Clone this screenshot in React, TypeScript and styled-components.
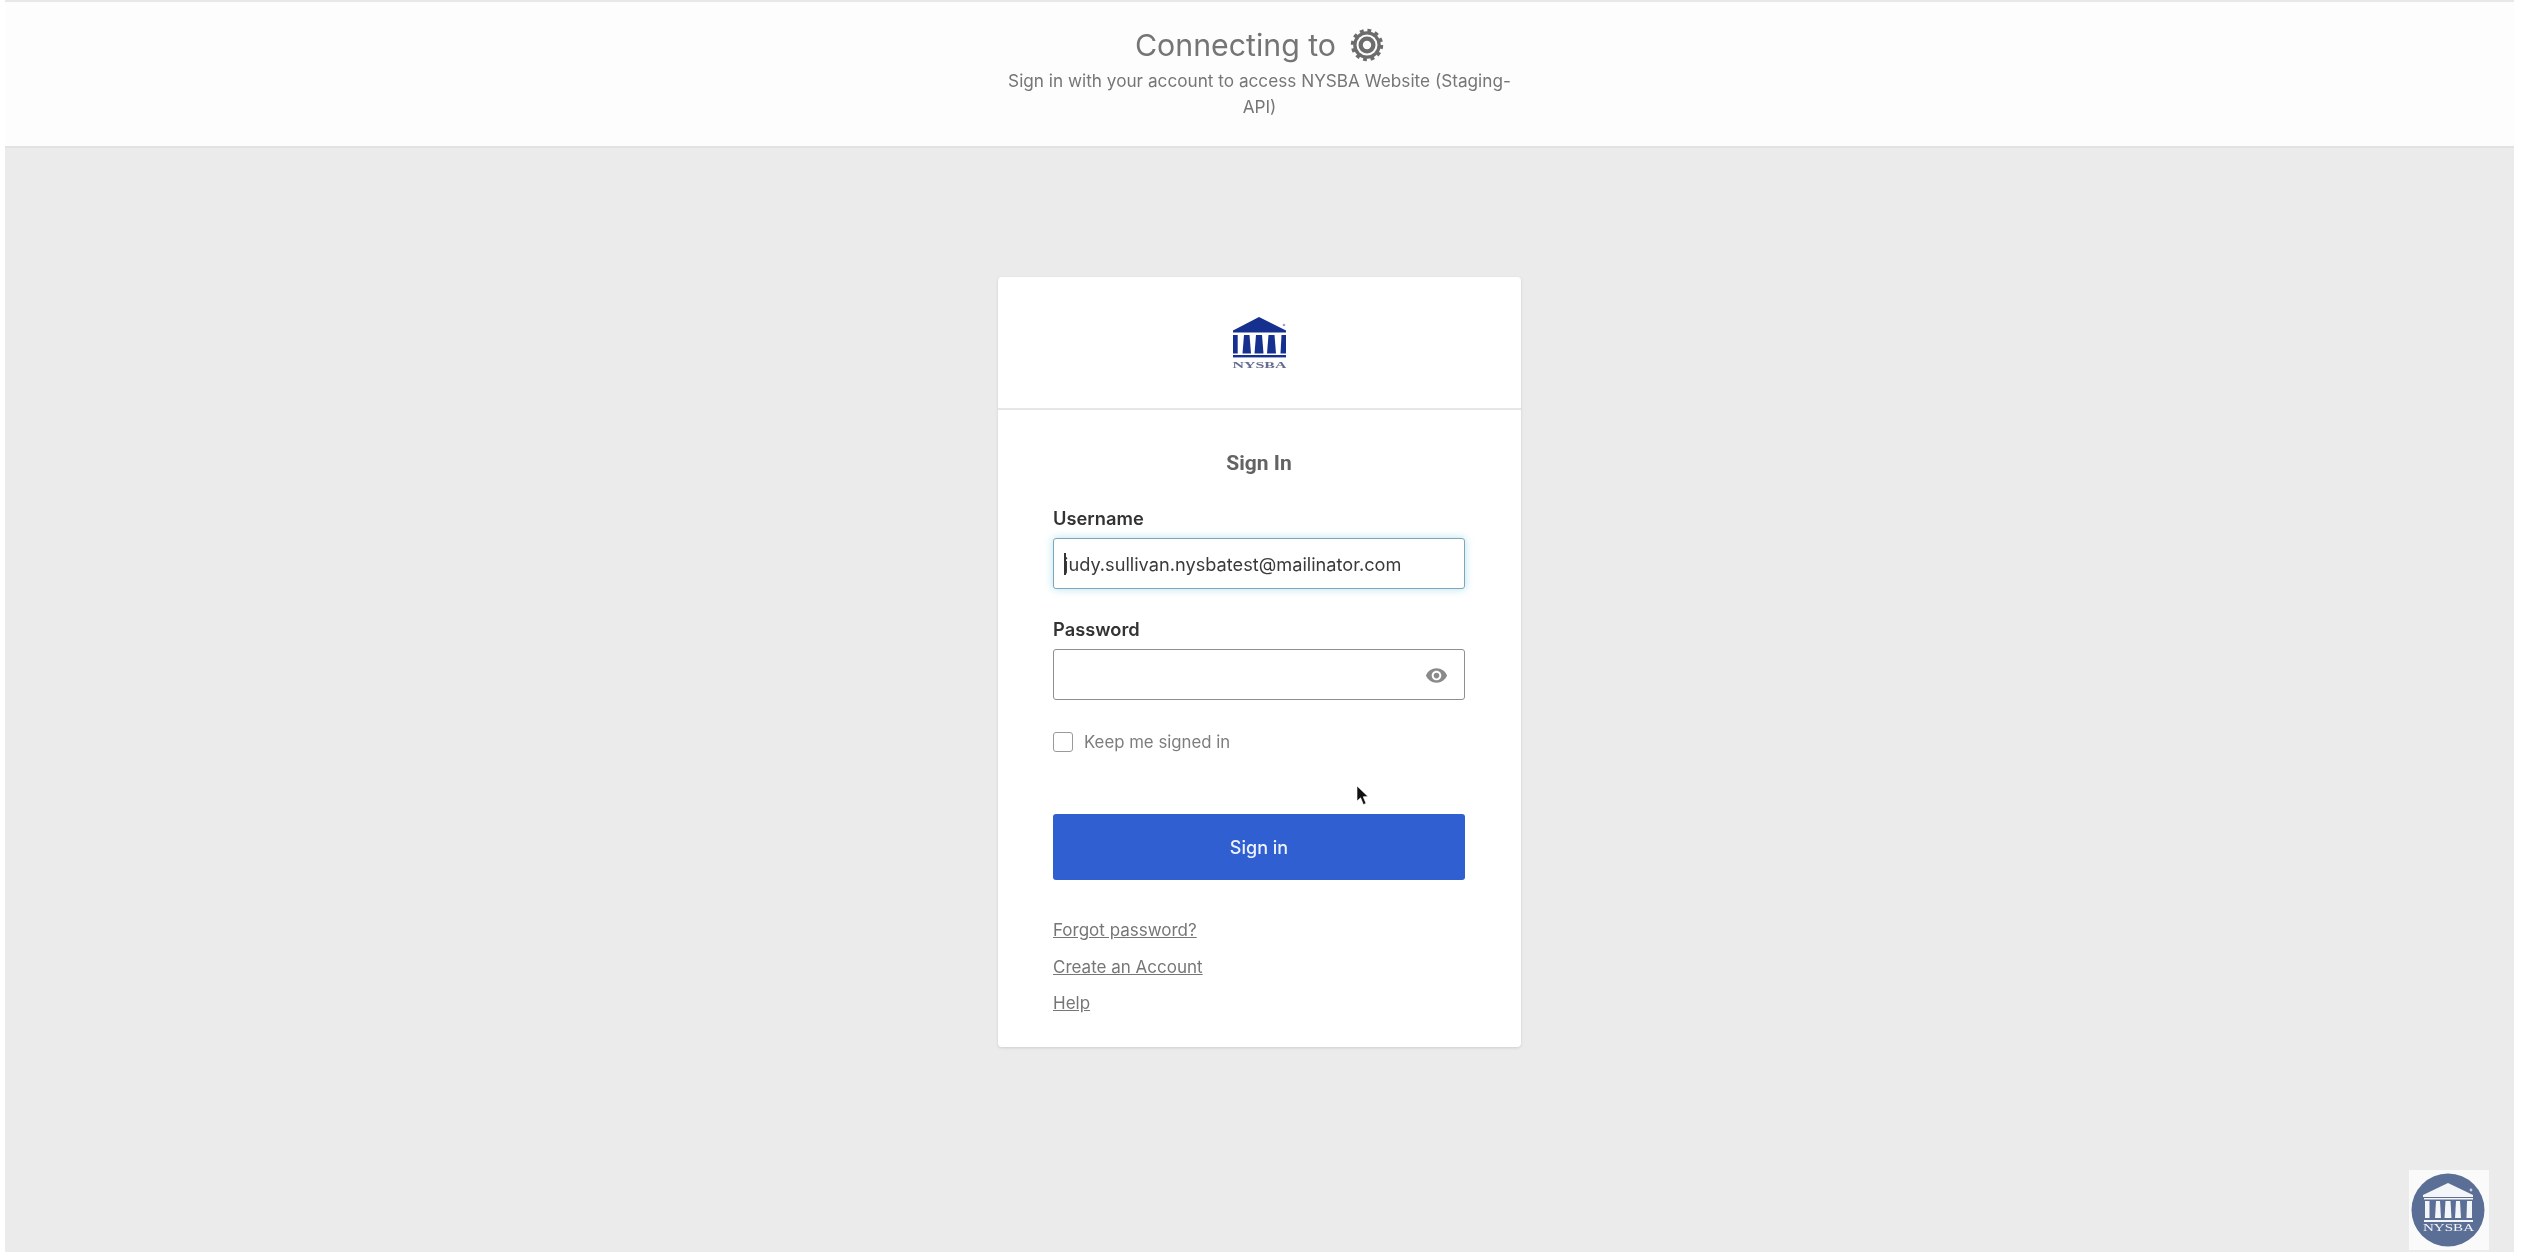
import React from 'react';
import styled, { createGlobalStyle } from 'styled-components';

const GlobalStyle = createGlobalStyle`
  html, body {
    margin: 0;
    padding: 0;
    background: #fff;
  }
  * {
    box-sizing: border-box;
  }
`;

const Page = styled.div`
  position: relative;
  display: flex;
  flex-direction: column;
  height: 1252px;
  padding: 0 8px 0 5px;
  overflow: hidden;
  font-family: Inter, "Liberation Sans", sans-serif;
  filter: blur(0.45px);
`;

const TopBar = styled.header`
  display: flex;
  flex-direction: column;
  align-items: center;
  height: 148px;
  padding-top: 23px;
  background: #fdfdfd;
  border-top: 2px solid #e8e8e8;
  border-bottom: 2px solid #e2e2e2;
`;

const Connecting = styled.div`
  display: flex;
  align-items: center;
  gap: 14px;
  height: 40px;
  font-size: 30.3px;
  color: #757575;
`;

const Subtitle = styled.p`
  width: 510px;
  margin: 3px 0 0;
  font-size: 17.2px;
  line-height: 26px;
  text-align: center;
  color: #767676;
`;

const Main = styled.main`
  flex: 1;
  display: flex;
  justify-content: center;
  align-items: flex-start;
  padding-top: 129px;
  background: #ebebeb;
`;

const Card = styled.section`
  width: 523px;
  background: #fff;
  border-radius: 4px;
  box-shadow: 0 1px 3px rgba(0, 0, 0, 0.12);
`;

const CardLogo = styled.div`
  display: flex;
  justify-content: center;
  height: 133px;
  padding-top: 40px;
  border-bottom: 2px solid #e6e6e6;
`;

const CardBody = styled.div`
  padding: 40px 56px 32px 55px;
`;

const Title = styled.h1`
  margin: 0 0 31px;
  font-family: Roboto, "Liberation Sans", sans-serif;
  font-size: 21px;
  font-weight: 700;
  line-height: 26px;
  text-align: center;
  color: #636363;
`;

const Label = styled.label`
  display: block;
  margin-bottom: 9px;
  font-size: 18.3px;
  font-weight: 600;
  line-height: 22px;
  color: #333;
`;

const InputWrap = styled.div`
  position: relative;
  height: 51px;
  margin-bottom: 29px;
`;

const Input = styled.input<{ $focused?: boolean }>`
  width: 100%;
  height: 100%;
  padding: 0 10px;
  font-family: inherit;
  font-size: 18.2px;
  color: #3a3a3a;
  background: #fff;
  border: 1.5px solid ${(p) => (p.$focused ? '#7fa6b8' : '#8f8f8f')};
  border-radius: 3px;
  outline: none;
  box-shadow: ${(p) => (p.$focused ? '0 0 9px rgba(120, 200, 230, 0.55)' : 'none')};
`;

const Caret = styled.span`
  position: absolute;
  left: 11px;
  top: 15px;
  width: 2px;
  height: 22px;
  background: #333;
`;

const EyeButton = styled.span`
  position: absolute;
  right: 17px;
  top: 15px;
  display: flex;
  color: #8a8a8a;
`;

const CheckRow = styled.div`
  display: flex;
  align-items: center;
  gap: 11px;
  height: 20px;
  margin-top: 32px;
  font-size: 16.8px;
  color: #7d7d7d;
`;

const CheckBox = styled.span`
  width: 20px;
  height: 20px;
  background: #fff;
  border: 1.5px solid #9a9a9a;
  border-radius: 3px;
`;

const SubmitButton = styled.button`
  display: block;
  width: 100%;
  height: 66px;
  margin-top: 62px;
  font-family: inherit;
  font-size: 18px;
  font-weight: 500;
  color: #eef3fc;
  background: #2f5fd0;
  border: none;
  border-radius: 3px;
`;

const LinkList = styled.nav`
  display: flex;
  flex-direction: column;
  align-items: flex-start;
  gap: 12.5px;
  margin-top: 38px;
`;

const TextLink = styled.a`
  font-size: 17px;
  line-height: 24px;
  color: #767676;
  text-decoration: underline;
`;

const Pointer = styled.svg`
  position: absolute;
  left: 1356px;
  top: 785px;
`;

const BadgeLogo = styled.div`
  position: absolute;
  left: 2409px;
  top: 1170px;
  display: flex;
  width: 80px;
  height: 80px;
  background: #fafafa;
`;

// the small gear from the connecting line
const GearIcon = () => (
  <svg width="34" height="34" viewBox="0 0 34 34">
    <circle cx="17" cy="17" r="14.5" fill="none" stroke="#6c6c6c" strokeWidth="3.4" strokeDasharray="3.8 3.79" />
    <circle cx="17" cy="17" r="13.8" fill="#6c6c6c" />
    <circle cx="17" cy="17" r="10.5" fill="#fdfdfd" />
    <circle cx="17" cy="17" r="8.5" fill="#6c6c6c" />
    <circle cx="17" cy="17" r="4.2" fill="#fdfdfd" />
  </svg>
);

const EyeIcon = () => (
  <svg width="23" height="23" viewBox="0 0 24 24" fill="currentColor">
    <path d="M12 4.5C7 4.5 2.73 7.61 1 12c1.73 4.39 6 7.5 11 7.5s9.27-3.11 11-7.5c-1.73-4.39-6-7.5-11-7.5zM12 17c-2.76 0-5-2.24-5-5s2.24-5 5-5 5 2.24 5 5-2.24 5-5 5zm0-8c-1.66 0-3 1.34-3 3s1.34 3 3 3 3-1.34 3-3-1.34-3-3-3z" />
  </svg>
);

const NysbaLogo = () => (
  <svg width="57" height="53" viewBox="0 0 57 53">
    <polygon points="28,0 55,13.5 55,15.5 2,15.5 2,13.5" fill="#16308f" />
    <circle cx="53" cy="8" r="1.3" fill="#9aa5c8" />
    <polygon points="2,18 6.7,18 6.7,36.5 2,36.5" fill="#16308f" />
    <polygon points="13,18 18.5,18 20,36.5 11.5,36.5" fill="#16308f" />
    <polygon points="25,18 31,18 32.5,36.5 23.5,36.5" fill="#16308f" />
    <polygon points="37.5,18 43.5,18 45,36.5 36,36.5" fill="#16308f" />
    <polygon points="50.5,18 55,18 55,36.5 49.5,36.5" fill="#16308f" />
    <rect x="2" y="38" width="53" height="2.4" fill="#16308f" />
    <text x="1.5" y="51" textLength="54" lengthAdjust="spacingAndGlyphs" fontFamily="'Liberation Serif', serif" fontSize="9" fontWeight="700" fill="#666c8e">
      NYSBA
    </text>
  </svg>
);

const NysbaBadge = () => (
  <svg width="80" height="80" viewBox="0 0 80 80">
    <circle cx="39" cy="40" r="36.5" fill="#5a6e96" />
    <polygon points="39,13 64,25 64,27 14,27 14,25" fill="#f4f5f8" />
    <circle cx="62" cy="20" r="1.4" fill="#cdd3e0" />
    <rect x="15" y="28" width="49" height="1.5" fill="#f4f5f8" />
    <polygon points="16,31 20.5,31 20.5,48 16,48" fill="#f4f5f8" />
    <polygon points="27,31 31,31 32,48 26,48" fill="#f4f5f8" />
    <polygon points="36.5,31 41.5,31 42.5,48 35.5,48" fill="#f4f5f8" />
    <polygon points="47,31 51,31 52,48 46,48" fill="#f4f5f8" />
    <polygon points="58,31 63,31 63,48 57.5,48" fill="#f4f5f8" />
    <rect x="15" y="50" width="49" height="2" fill="#f4f5f8" />
    <text x="14" y="60.5" textLength="51" lengthAdjust="spacingAndGlyphs" fontFamily="'Liberation Serif', serif" fontSize="9.5" fill="#f4f5f8">
      NYSBA
    </text>
  </svg>
);

export default function App() {
  return (
    <>
      <GlobalStyle />
      <Page>
        <TopBar>
          <Connecting>
            Connecting to
            <GearIcon />
          </Connecting>
          <Subtitle>Sign in with your account to access NYSBA Website (Staging-API)</Subtitle>
        </TopBar>
        <Main>
          <Card>
            <CardLogo>
              <NysbaLogo />
            </CardLogo>
            <CardBody>
              <Title>Sign In</Title>
              <Label>Username</Label>
              <InputWrap>
                <Input $focused readOnly defaultValue="judy.sullivan.nysbatest@mailinator.com" />
                <Caret />
              </InputWrap>
              <Label>Password</Label>
              <InputWrap>
                <Input readOnly type="password" />
                <EyeButton>
                  <EyeIcon />
                </EyeButton>
              </InputWrap>
              <CheckRow>
                <CheckBox />
                Keep me signed in
              </CheckRow>
              <SubmitButton>Sign in</SubmitButton>
              <LinkList>
                <TextLink>Forgot password?</TextLink>
                <TextLink>Create an Account</TextLink>
                <TextLink>Help</TextLink>
              </LinkList>
            </CardBody>
          </Card>
        </Main>
        <Pointer width="14" height="22" viewBox="0 0 14 22">
          <path d="M1 1 L1 16 L4.6 12.8 L7.4 19.5 L10 18.4 L7.2 11.8 L12 11.6 Z" fill="#111" stroke="#fff" strokeWidth="0.6" />
        </Pointer>
        <BadgeLogo>
          <NysbaBadge />
        </BadgeLogo>
      </Page>
    </>
  );
}
